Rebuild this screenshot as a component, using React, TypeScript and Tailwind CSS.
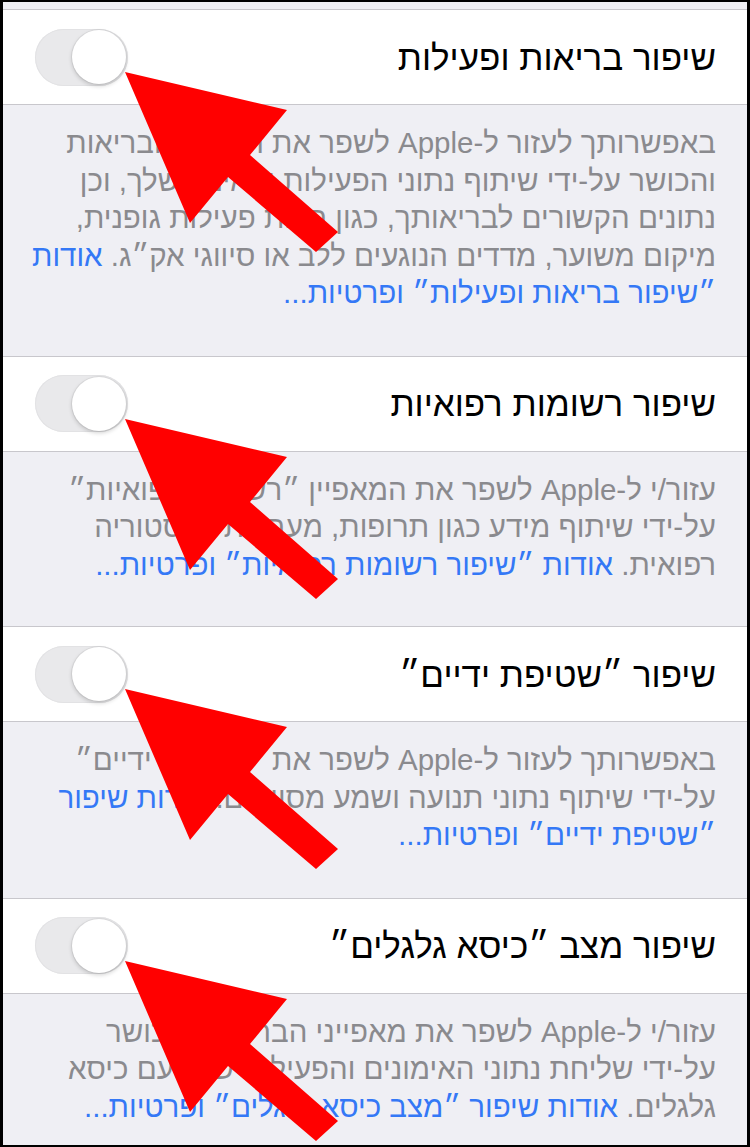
import React from "react";

const FONT = { fontFamily: '"Liberation Sans", Arial, "DejaVu Sans", sans-serif' };

function Toggle() {
  return (
    <div dir="ltr" className="w-[93px] h-[57px] rounded-full bg-[#e9e9eb] flex items-center justify-end pr-[2px] shadow-[inset_0_0_0_1px_#e2e2e4]">
      <div className="w-[54px] h-[54px] rounded-full bg-white shadow-[0_2px_4px_rgba(0,0,0,0.18),0_0_0_1px_rgba(0,0,0,0.05)]" />
    </div>
  );
}

function Arrow() {
  return (
    <svg
      className="absolute left-[97px] top-[40px] z-10 pointer-events-none"
      width="250"
      height="220"
      viewBox="0 0 250 220"
    >
      <polygon
        points="25,23 187,61 150,106 238,183 216,203 128,128 90,174"
        fill="#ff0000"
      />
    </svg>
  );
}

type Part = { t: string; link?: boolean };

function Section({ title, lines, pb }: { title: string; lines: Part[][]; pb: string }) {
  return (
    <div className="relative">
      <div className="h-[96px] bg-white border-y border-[#c8c7cc] flex items-center justify-between pr-[31px] pl-[32px]">
        <div className="text-[35px] text-black leading-none whitespace-nowrap">{title}</div>
        <Toggle />
      </div>
      <div className={`bg-[#efeff4] pt-[19px] ${pb} pr-[31px] pl-[20px]`}>
        {lines.map((line, i) => (
          <div key={i} className="text-[29.5px] leading-[37.5px] text-[#8a8a8e] whitespace-nowrap">
            {line.map((p, j) => (
              <span key={j} className={p.link ? "text-[#3478f6]" : ""}>
                {p.t}
              </span>
            ))}
          </div>
        ))}
      </div>
      <Arrow />
    </div>
  );
}

export default function App() {
  return (
    <div className="w-[750px] h-[1147px] bg-black pt-[2px] pl-[3px] pr-[3px] pb-[2px] overflow-hidden" style={FONT}>
      <div dir="rtl" className="w-full h-full bg-[#efeff4] overflow-hidden flex flex-col">
        <div className="h-[7px] shrink-0" />
        <Section
          title="שיפור בריאות ופעילות"
          pb="pb-[44px]"
          lines={[
            [{ t: "באפשרותך לעזור ל-Apple לשפר את תכונות הבריאות" }],
            [{ t: "והכושר על-ידי שיתוף נתוני הפעילות והאימון שלך, וכן" }],
            [{ t: "נתונים הקשורים לבריאותך, כגון רמות פעילות גופנית," }],
            [{ t: "מיקום משוער, מדדים הנוגעים ללב או סיווגי אק״ג. " }, { t: "אודות", link: true }],
            [{ t: "״שיפור בריאות ופעילות״ ופרטיות...", link: true }],
          ]}
        />
        <Section
          title="שיפור רשומות רפואיות"
          pb="pb-[43px]"
          lines={[
            [{ t: "עזור/י ל-Apple לשפר את המאפיין ״רשומות רפואיות״" }],
            [{ t: "על-ידי שיתוף מידע כגון תרופות, מעבדות והיסטוריה" }],
            [{ t: "רפואית. " }, { t: "אודות ״שיפור רשומות רפואיות״ ופרטיות...", link: true }],
          ]}
        />
        <Section
          title="שיפור ״שטיפת ידיים״"
          pb="pb-[44px]"
          lines={[
            [{ t: "באפשרותך לעזור ל-Apple לשפר את ״שטיפת ידיים״" }],
            [{ t: "על-ידי שיתוף נתוני תנועה ושמע מסוימים. " }, { t: "אודות שיפור", link: true }],
            [{ t: "״שטיפת ידיים״ ופרטיות...", link: true }],
          ]}
        />
        <Section
          title="שיפור מצב ״כיסא גלגלים״"
          pb="pb-[44px]"
          lines={[
            [{ t: "עזור/י ל-Apple לשפר את מאפייני הבריאות והכושר" }],
            [{ t: "על-ידי שליחת נתוני האימונים והפעילות שלך עם כיסא" }],
            [{ t: "גלגלים. " }, { t: "אודות שיפור ״מצב כיסא גלגלים״ ופרטיות...", link: true }],
          ]}
        />
      </div>
    </div>
  );
}
